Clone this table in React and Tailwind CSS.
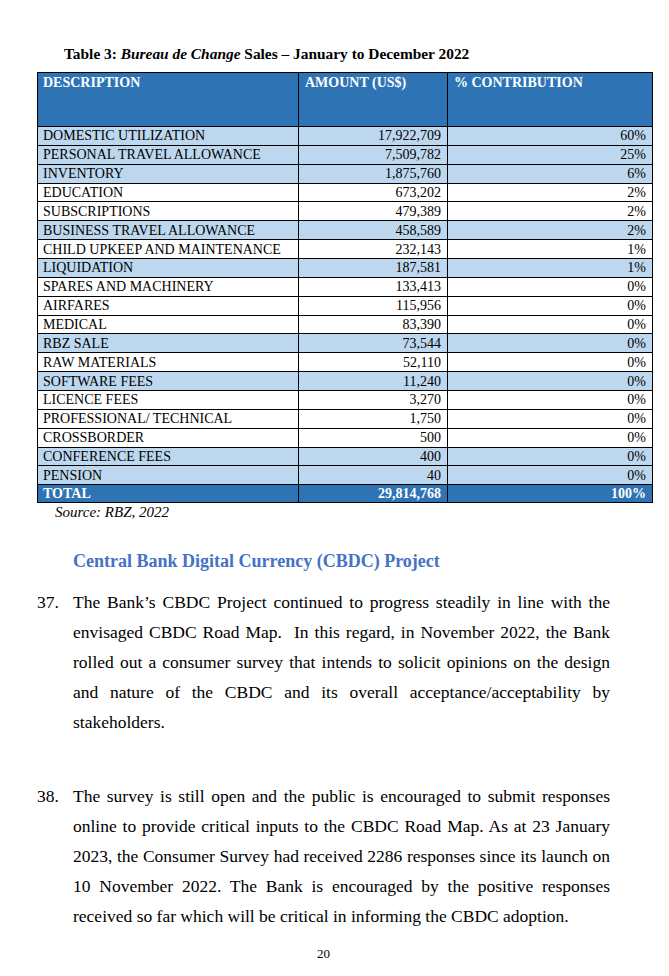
const ROWS = [
  ['DOMESTIC UTILIZATION', '17,922,709', '60%', true],
  ['PERSONAL TRAVEL ALLOWANCE', '7,509,782', '25%', true],
  ['INVENTORY', '1,875,760', '6%', true],
  ['EDUCATION', '673,202', '2%', false],
  ['SUBSCRIPTIONS', '479,389', '2%', false],
  ['BUSINESS TRAVEL ALLOWANCE', '458,589', '2%', true],
  ['CHILD UPKEEP AND MAINTENANCE', '232,143', '1%', false],
  ['LIQUIDATION', '187,581', '1%', true],
  ['SPARES AND MACHINERY', '133,413', '0%', false],
  ['AIRFARES', '115,956', '0%', false],
  ['MEDICAL', '83,390', '0%', false],
  ['RBZ SALE', '73,544', '0%', true],
  ['RAW MATERIALS', '52,110', '0%', false],
  ['SOFTWARE FEES', '11,240', '0%', true],
  ['LICENCE FEES', '3,270', '0%', false],
  ['PROFESSIONAL/ TECHNICAL', '1,750', '0%', false],
  ['CROSSBORDER', '500', '0%', false],
  ['CONFERENCE FEES', '400', '0%', true],
  ['PENSION', '40', '0%', true],
];

function Para({ num, children }) {
  return (
    <div className="flex text-[17.5px] leading-[30px] text-black">
      <span className="w-9 shrink-0">{num}</span>
      <p className="w-[537px] text-justify">{children}</p>
    </div>
  );
}

export default function App() {
  return (
    <div className="min-h-screen w-[669px] bg-white font-['Liberation_Serif',serif] text-black">
      <div className="pl-[37px] pt-[45px]">
        <h2 className="pl-[27px] text-[15.4px] font-bold leading-[18px]">
          Table 3: <i>Bureau de Change</i> Sales – January to December 2022
        </h2>

        <table className="mt-[9px] w-[615px] table-fixed border-collapse border border-black text-[14px] leading-[17px]">
          <colgroup>
            <col className="w-[261px]" />
            <col className="w-[149px]" />
            <col className="w-[205px]" />
          </colgroup>
          <thead>
            <tr className="bg-[#2e74b5] font-bold text-white">
              <td className="h-[54px] border border-black px-[5px] pt-[1px] align-top">DESCRIPTION</td>
              <td className="h-[54px] border border-black px-[6px] pt-[1px] align-top">AMOUNT (US$)</td>
              <td className="h-[54px] border border-black px-[6px] pt-[1px] align-top">% CONTRIBUTION</td>
            </tr>
          </thead>
          <tbody>
            {ROWS.map(([name, amount, pct, blue]) => (
              <tr key={name} className={blue ? 'bg-[#bdd7ee]' : 'bg-white'}>
                <td className="h-[18.87px] border border-black px-[5px] py-0 whitespace-nowrap">{name}</td>
                <td className="h-[18.87px] border border-black px-[6px] py-0 text-right">{amount}</td>
                <td className="h-[18.87px] border border-black px-[6px] py-0 text-right">{pct}</td>
              </tr>
            ))}
            <tr className="bg-[#2e74b5] font-bold text-white">
              <td className="h-[17px] border border-black px-[5px] py-0">TOTAL</td>
              <td className="h-[17px] border border-black px-[6px] py-0 text-right">29,814,768</td>
              <td className="h-[17px] border border-black px-[6px] py-0 text-right">100%</td>
            </tr>
          </tbody>
        </table>

        <p className="pl-[18px] text-[15px] italic leading-[18px]">Source: RBZ, 2022</p>

        <h3 className="mt-[29px] pl-9 text-[18px] font-bold leading-[22px] text-[#4472c4]">
          Central Bank Digital Currency (CBDC) Project
        </h3>

        <div className="mt-[15px]">
          <Para num="37.">
            The Bank’s CBDC Project continued to progress steadily in line with the envisaged CBDC Road Map.&nbsp; In this regard, in November 2022, the Bank rolled out a consumer survey that intends to solicit opinions on the design and nature of the CBDC and its overall acceptance/acceptability by stakeholders.
          </Para>
        </div>

        <div className="mt-[44px]">
          <Para num="38.">
            The survey is still open and the public is encouraged to submit responses online to provide critical inputs to the CBDC Road Map. As at 23 January 2023, the Consumer Survey had received 2286 responses since its launch on 10 November 2022. The Bank is encouraged by the positive responses received so far which will be critical in informing the CBDC adoption.
          </Para>
        </div>
      </div>

      <p className="mt-[15px] pr-[22px] text-center text-[13px] leading-[16px]">20</p>
    </div>
  );
}
